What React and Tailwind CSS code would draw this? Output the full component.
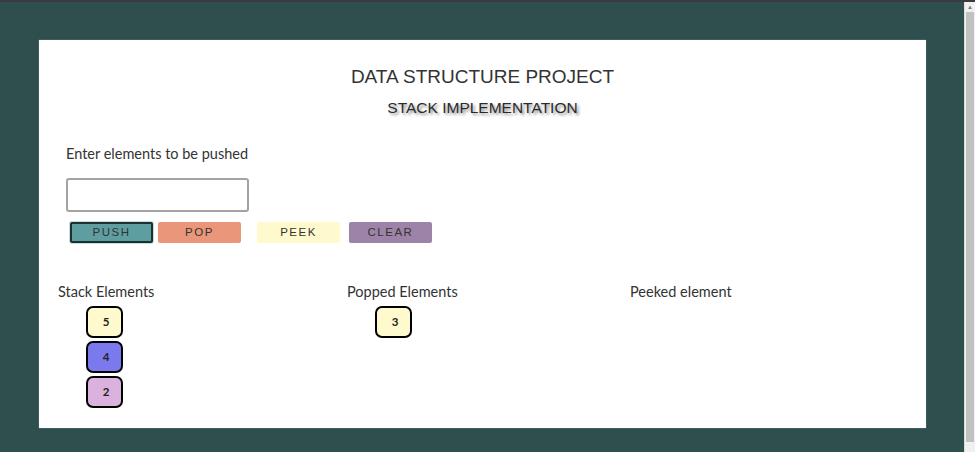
export default function App() {
  return (
    <div className="w-[975px] h-[452px] bg-[#2f4f4f] flex flex-col overflow-hidden">
      <div className="h-[2px] bg-[#3b3a3f] shrink-0" />
      <div className="flex flex-1">
        <div className="flex-1">
          <div className="ml-[39px] mt-[38px] w-[887px] h-[388px] bg-white shadow-[0_0_1px_#8aa]">
            <div className="pt-[26px] text-center text-[#333] font-['Liberation_Sans',Arial,sans-serif]">
              <div className="text-[19px] leading-[22px]">DATA STRUCTURE PROJECT</div>
              <div className="mt-[11px] text-[15.5px] leading-[18px] text-[#2a2a2a] [text-shadow:2px_2px_3px_#888]">STACK IMPLEMENTATION</div>
            </div>
            <div className="pl-[27px] mt-[28px]">
              <div className="text-[14.5px] leading-[18px] text-[#333] font-['Lato',sans-serif]">Enter elements to be pushed</div>
              <input className="mt-[15px] block w-[183px] h-[34px] border-2 border-[#a3a3a3] rounded-[3px] outline-none" />
              <div className="flex mt-[10px] ml-[4px] font-['Liberation_Sans',Arial,sans-serif] text-[11.5px] tracking-[1.5px] text-[#333]">
                <button className="w-[83px] h-[21px] bg-[#5f9ea0] border-2 border-[#1f2f2f] rounded-[2px] shadow-[0_0_0_1px_#bfe0e0]">PUSH</button>
                <button className="ml-[5px] w-[83px] h-[21px] bg-[#e9967a] rounded-[2px]">POP</button>
                <button className="ml-[16px] w-[83px] h-[21px] bg-[#fffacd] rounded-[2px]">PEEK</button>
                <button className="ml-[9px] w-[83px] h-[21px] bg-[#9e83a9] rounded-[2px]">CLEAR</button>
              </div>
            </div>
            <div className="flex pl-[19px] mt-[40px] text-[14.5px] leading-[18px] text-[#333] font-['Lato',sans-serif]">
              <div className="w-[289px]">
                <div>Stack Elements</div>
                <div className="ml-[28px] mt-[5px] flex flex-col gap-[3px]">
                  <Box n="5" bg="bg-[#fffacd]" />
                  <Box n="4" bg="bg-[#7b79ee]" />
                  <Box n="2" bg="bg-[#dbb1dd]" />
                </div>
              </div>
              <div className="w-[283px]">
                <div>Popped Elements</div>
                <div className="ml-[28px] mt-[5px] flex flex-col gap-[3px]">
                  <Box n="3" bg="bg-[#fffacd]" />
                </div>
              </div>
              <div>
                <div>Peeked element</div>
              </div>
            </div>
          </div>
        </div>
        <div className="w-[11px] bg-[#f0f0f0] flex flex-col border-l border-[#dcdcdc]">
          <div className="h-[10px] flex items-center justify-center text-[6px] text-[#777]">▲</div>
          <div className="flex-1 mx-[1px] bg-[#c1c1c1]" />
          <div className="h-[10px]" />
        </div>
      </div>
    </div>
  );
}

function Box({ n, bg }) {
  return (
    <div className={`w-[37px] h-[32px] ${bg} border-2 border-black rounded-[7px] flex items-center justify-center pl-[3px] text-[11.5px] font-bold text-[#222]`}>
      {n}
    </div>
  );
}
